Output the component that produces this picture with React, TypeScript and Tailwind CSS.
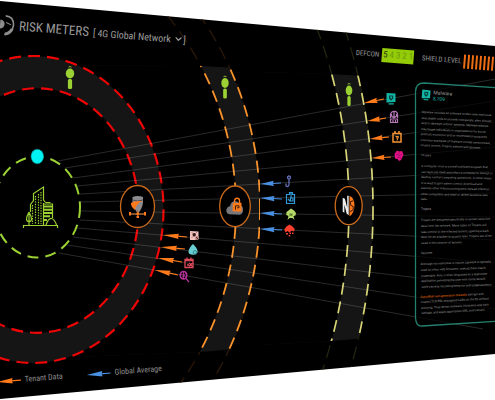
import { ChevronDown } from "lucide-react";
import type { ReactNode } from "react";

type Point = [number, number];

const ORANGE = "#ff7a1a";
const BLUE = "#4a90e2";

const rays: [number, number, number, number][] = [
  [58, 161, 495, 79],
  [65, 168, 495, 101],
  [73, 178, 495, 122],
  [77, 186, 495, 147],
  [80, 194, 495, 171],
  [81, 202, 495, 193],
  [81, 211, 495, 217],
  [80, 220, 495, 240],
  [77, 228, 495, 263],
  [73, 237, 495, 287],
  [67, 245, 495, 309],
  [59, 253, 483, 329],
];

const arrows: { tip: Point; tail: Point; color: string }[] = [
  { tip: [163, 235], tail: [187, 237], color: ORANGE },
  { tip: [161, 247], tail: [185, 249], color: ORANGE },
  { tip: [158, 258], tail: [182, 262], color: ORANGE },
  { tip: [155, 270], tail: [178, 275], color: ORANGE },
  { tip: [260, 184], tail: [281, 183], color: BLUE },
  { tip: [260, 198], tail: [282, 199], color: BLUE },
  { tip: [260, 213], tail: [282, 214], color: BLUE },
  { tip: [260, 229], tail: [282, 230], color: BLUE },
  { tip: [364, 103], tail: [384, 99], color: ORANGE },
  { tip: [368, 121], tail: [386, 118], color: ORANGE },
  { tip: [370, 139], tail: [389, 137], color: ORANGE },
  { tip: [372, 158], tail: [391, 157], color: ORANGE },
];

const articles: { title?: string; link?: string; tilt: string; titleTilt: string; height: string; lines: string[] }[] = [
  {
    tilt: "rotate-[2.6deg]",
    titleTilt: "",
    height: "h-[38px]",
    lines: [
      "Malware includes all software written with malicious",
      "executable code to secretly manipulate, alter, disrupt",
      "and/or damage victims' systems. Malware attacks",
      "may target individuals or organizations for social",
      "political, economic and/or monetization purposes",
      "Common examples of malware include ransomware,",
      "viruses, worms, Trojans, adware and spyware.",
    ],
  },
  {
    title: "Viruses",
    tilt: "rotate-[1deg]",
    titleTilt: "rotate-[2deg]",
    height: "h-[38px]",
    lines: [
      "A computer virus is a small software program that",
      "can replicate itself and infect a computer to disrupt or",
      "destroy normal computing operations. In other cases",
      "it is used to gain admin control, download and",
      "execute other malicious programs, spread infection",
      "other computers, and steal or delete sensitive user",
      "data.",
    ],
  },
  {
    title: "Trojans",
    tilt: "rotate-[-1deg]",
    titleTilt: "rotate-0",
    height: "h-[28px]",
    lines: [
      "Trojans are designed specifically to extract sensitive",
      "data from the network. Many types of Trojans will",
      "take control of the infected system, opening a back",
      "door for an attacker to access later. Trojans are often",
      "used in the creation of botnets.",
    ],
  },
  {
    title: "Spyware",
    tilt: "rotate-[-2deg]",
    titleTilt: "rotate-[-2deg]",
    height: "h-[28px]",
    lines: [
      "Although not malicious in nature, spyware is typically",
      "used to infect web browsers, making them nearly",
      "inoperable. Also, it often disguised as a legitimate",
      "application, providing the user with some benefit",
      "while secretly recording behavior and usage patterns.",
    ],
  },
  {
    link: "SonicWall next-generation firewalls",
    tilt: "rotate-[-3deg]",
    titleTilt: "",
    height: "h-[21px]",
    lines: [
      " decrypt and",
      "inspect TLS/SSL encrypted traffic on the fly without",
      "proxying. They detect malware, intrusions and data",
      "leakage, and apply application/URL and content",
    ],
  },
];

function Arrow({ tip, tail, color }: { tip: Point; tail: Point; color: string }) {
  const dx = tail[0] - tip[0];
  const dy = tail[1] - tip[1];
  const length = Math.hypot(dx, dy);
  const angle = (Math.atan2(dy, dx) * 180) / Math.PI;
  const head = length * 0.66;
  return (
    <g transform={`translate(${tip[0]} ${tip[1]}) rotate(${angle})`} fill={color} stroke={color}>
      <path d={`M0 0L${head} -2.7L${head - 1} 0L${head} 2.7Z`} stroke="none" />
      <path d={`M${head - 2} 0H${length}`} strokeWidth="1.1" />
    </g>
  );
}

function Sensor({ x, y, rx }: { x: number; y: number; rx: number }) {
  return (
    <g fill="#9bd133">
      <path d={`M${x - 2} ${y - 6.2}Q${x} ${y - 8.4} ${x + 2} ${y - 6.2}Z`} />
      <ellipse cx={x} cy={y} rx={rx} ry="5" />
      <rect x={x - rx / 2} y={y + 5.4} width={rx} height="10" rx="1.5" />
    </g>
  );
}

function Badge({ x, y, rx, ry, children }: { x: number; y: number; rx: number; ry: number; children: ReactNode }) {
  return (
    <g>
      <ellipse cx={x} cy={y} rx={rx} ry={ry} fill="#000" stroke="#cc6a1c" strokeWidth="1.3" />
      <g transform={`translate(${x} ${y})`}>{children}</g>
    </g>
  );
}

function Monitor() {
  return (
    <>
      <path d="M-4.5 -5L4.5 -4.5V4L-4.5 4.5Z" fill="#12b5a6" />
      <path d="M-2 -2.6H2.2V0.6L0 2.8L-2 0.6Z" fill="#07423d" />
      <path d="M-0.8 -1.4H1V0.2H-0.8Z" fill="#12b5a6" />
      <path d="M-2.4 5.8H2.8" stroke="#12b5a6" strokeWidth="1.2" />
    </>
  );
}

function City() {
  return (
    <g fill="none" stroke="#9bd133" strokeWidth="1.2">
      <path d="M23.500 228V225.500H57.500V228" />
      <path d="M30.500 212V204.500L33.500 200.500V193.500L43.500 187V200L45.500 202.500" />
      <path d="M43.500 204H52.500V218" />
      <path d="M43.500 206.500H52M43.500 209.800H52M43.500 213H52M43.500 216.300H50M43.500 220H47" strokeWidth="1.9" />
      <path d="M43.500 203V225" />
      <path d="M35.500 196V224M38.500 194V224M41 192V224" strokeDasharray="1.4 1.2" />
      <path d="M32.500 205V224" strokeDasharray="1.4 1.2" />
      <path d="M29 225V212M29 212Q24 221 29 221.500Q34 221 29 212" />
      <path d="M46 225Q48.500 218 51.500 218.500Q54.500 219 56.500 225" />
      <path d="M45.500 202.500H50.500" />
    </g>
  );
}

function ThreatIcons() {
  return (
    <>
      <g transform="translate(194.500 235.500)">
        <path d="M-4.500 -4.500L4 -4V2L1 4.500H-4.500Z" fill="#f2c4bd" />
        <circle r="1.7" cx="-0.300" cy="-0.800" fill="#3b1c1c" />
        <path d="M-2.500 -3L-1.500 -2M2 -3L1 -2M-2.500 2L-1.500 1" stroke="#3b1c1c" strokeWidth="0.700" />
        <circle r="2" cx="2.600" cy="2.600" fill="#b98985" />
        <path d="M1.400 1.400L3.800 3.800" stroke="#2b1515" strokeWidth="0.700" />
      </g>
      <g transform="translate(193 249.500)">
        <path d="M0 -5.500Q5.500 0 4.500 3Q3 5.500 0 5.200Q-5 5 -4.500 2Q-4 -2 0 -5.500Z" fill="#69cdd2" />
        <circle r="1.800" cx="2" cy="3" fill="none" stroke="#24757a" strokeWidth="0.800" />
      </g>
      <g transform="translate(189 263)" fill="none" stroke="#dd4a5c" strokeWidth="1.300">
        <path d="M-4 -3.500H4V4.500H-4ZM-4 -2.500H4M-2 -5.500V-3M2 -5.500V-3" />
        <path d="M0 0L3.500 3.500M3.500 0L0 3.500M-2 2H0" />
      </g>
      <g transform="translate(184 276)" fill="none" stroke="#b8329b">
        <ellipse cx="-0.500" cy="-0.800" rx="3.300" ry="3.800" strokeWidth="1.500" />
        <path d="M-3 -2L2 1M2 -3L-2.500 2M-0.500 -4V3" strokeWidth="0.900" />
        <path d="M2 2.500L5 6" strokeWidth="1.200" />
      </g>
      <g transform="translate(288 181.500)" fill="none" stroke="#6570b8" strokeWidth="1.300">
        <circle cx="1" cy="-4" r="1.500" />
        <path d="M1 -2V3Q0.500 6 -2 4.500V2" />
      </g>
      <g transform="translate(290.500 198)" fill="none" stroke="#3198d4" strokeWidth="1.200">
        <path d="M-4 -3.500H-1V-5.500H2V-3.500H4V5.500H-4ZM0.500 -5V0" />
        <path d="M-2.500 1L0 3.500M0 0H2.500V3H0Z" />
      </g>
      <g transform="translate(291 214)">
        <path d="M0 -5.500L3 -3.500L5 -1L4.500 1.500L2.500 2L3.500 6L1.500 4H-1.500L-3.500 6L-2.500 2L-4.800 1L-4.500 -2L-2.500 -3.500Z" fill="#b5d969" />
        <path d="M-1.500 -0.500H1.500V1.800H-1.500Z" fill="#5f7c2c" />
      </g>
      <g transform="translate(289.500 230.500)" fill="#ff3f2d">
        <path d="M0 -6L3 -4L5.200 -1.500L4.500 1L2 0L0 2L-2 0.500L-4 2L-5.200 -1L-3 -4Z" />
        <path d="M-3.500 2.500H-1.500V4H-3.500ZM0 2H1.500V3.500H0ZM2.500 2H4V3.500H2.500ZM-0.800 4.500H0.800V6H-0.800Z" />
      </g>
      <g transform="translate(391 98)">
        <Monitor />
      </g>
      <g transform="translate(394 117)" fill="none" stroke="#b577b8" strokeWidth="1.200">
        <path d="M-3.500 1V-3Q-2 -6 0 -5.500Q3 -6 3.500 -3V1" />
        <path d="M-2.500 -3V-1L0 1L2.500 -1V-3M0 -5V1" />
        <path d="M-3.500 2V5.500H3.500V2ZM-1 3V5M1.500 3V5" />
      </g>
      <g transform="translate(397 137)" fill="none" stroke="#f79433" strokeWidth="1.500">
        <path d="M-4 -3.500H4V5H-4ZM-2 -6V-3M2 -6V-3" />
        <path d="M-1.500 -0.500H1.500L0 3.500M0 0V2" strokeWidth="1" />
      </g>
      <g transform="translate(399 156)">
        <path d="M-2 -5.500L0 -4.500L3 -5L4.500 -1.500L3.500 1L2 4L0 5L-1.500 3L-4 2.500L-4.500 -2Z" fill="#e5118a" />
        <path d="M-3 -1L-1 -2L0 0L3 -2M-2 2L0 1L2 2M0 -4V-2" stroke="#8f0c58" strokeWidth="0.800" fill="none" />
      </g>
    </>
  );
}

function ThreatMap() {
  return (
    <svg
      className="absolute inset-0 h-full w-full"
      viewBox="0 0 495 400"
      preserveAspectRatio="xMinYMin meet"
      role="img"
      aria-label="Threat map"
    >
      <defs>
        <clipPath id="screen">
          <path d="M0 1L495 46V354L0 399Z" />
        </clipPath>
        <clipPath id="orange-zone">
          <path d="M0 65L200 66L260 69V347L200 352L0 360Z" />
        </clipPath>
        <clipPath id="yellow-zone">
          <path d="M260 72L331 74L380 77V337L331 341L260 345Z" />
        </clipPath>
      </defs>
      <g clipPath="url(#screen)">
        <rect width="495" height="400" fill="#000" />
        <g fill="none" strokeWidth="1.300" strokeDasharray="13 7">
          <g stroke="#242411">
            <ellipse cx="44" cy="207" rx="305" ry="400" />
            <ellipse cx="78" cy="208" rx="295" ry="420" />
          </g>
          <g stroke="#2c1808">
            <ellipse cx="-59" cy="208" rx="295" ry="300" />
            <ellipse cx="-40" cy="208" rx="300" ry="320" />
          </g>
        </g>
        <g clipPath="url(#yellow-zone)" strokeWidth="1.700" stroke="#d9d677" strokeDasharray="12 7">
          <ellipse cx="78" cy="208" rx="295" ry="420" fill="#151515" />
          <ellipse cx="44" cy="207" rx="305" ry="400" fill="#000" />
        </g>
        <g clipPath="url(#orange-zone)" strokeWidth="1.800" stroke="#f8922a" strokeDasharray="12 7">
          <ellipse cx="-40" cy="208" rx="300" ry="320" fill="#151515" />
          <ellipse cx="-59" cy="208" rx="295" ry="300" fill="#000" />
        </g>
        <g strokeWidth="2.200" stroke="#ee0505" strokeDasharray="12 7">
          <ellipse cx="33" cy="209.500" rx="130.500" ry="153.500" fill="#151515" />
          <ellipse cx="37" cy="210.500" rx="101.500" ry="122.300" fill="#000" />
        </g>
        <g stroke="#fff" strokeOpacity="0.160" strokeWidth="1">
          {rays.map(([x1, y1, x2, y2]) => (
            <line key={y1} x1={x1} y1={y1} x2={x2} y2={y2} />
          ))}
        </g>
        <path
          d="M500 88L424 83Q415.500 83 415.500 92V318Q416 326.500 422 326L500 321Z"
          fill="#000"
          fillOpacity="0.700"
          stroke="#24806e"
          strokeWidth="1.300"
        />
        <ellipse
          cx="37"
          cy="207"
          rx="43"
          ry="50.500"
          fill="none"
          stroke="#9bd133"
          strokeWidth="2"
          strokeDasharray="11 7"
        />
        <ellipse cx="37.300" cy="156.500" rx="6.300" ry="7.300" fill="#00f2f2" stroke="#007c80" strokeWidth="0.600" />
        <City />
        <Sensor x={70} y={73.5} rx={4.2} />
        <Sensor x={225} y={83} rx={3.7} />
        <Sensor x={349} y={90.5} rx={3.3} />
        <Badge x={137.5} y={206.5} rx={17} ry={21}>
          <path d="M-5 -9.500Q0 -11.500 5.500 -9.500V-4Q5 2 0.500 7Q-4 2 -5 -4Z" fill="#8c8c90" />
          <path d="M-5 -6.500Q0 -4.500 5.500 -6.500" stroke="#4e4e52" fill="none" />
          <path d="M5.500 -5.500Q-1 -4 -2.500 3.500Q-7 0 -6.500 -3.500Q-3 -6 5.500 -5.500Z" fill={ORANGE} />
          <path d="M-8 7.500H8M0.300 4V11" stroke="#b06b38" strokeWidth="1.500" />
          <path d="M-8.500 5.500H-6.500V9H-8.500ZM6.500 5.500H8.500V9H6.500ZM-1 6H1.600V8.600H-1ZM-1 9.500H1.500V11.500H-1Z" fill={ORANGE} />
        </Badge>
        <Badge x={235} y={206.3} rx={15.3} ry={20.3}>
          <path d="M-6 8Q-9.500 6.500 -8.500 3Q-7.500 0 -5 0Q-4 -5 0 -5Q4 -5 5 -1Q8.500 0 8 4Q8 7 5 8.500Z" fill="#77777b" />
          <path d="M-0.500 -3V-5.500Q0 -8 2 -8Q4.500 -8 4.500 -5.500V-3" fill="none" stroke={ORANGE} strokeWidth="1.400" />
          <path d="M-2.300 -3L6.500 -3.500V5.500L-2.300 5Z" fill={ORANGE} />
          <path d="M0.500 3.500V-0.500H4V1.500H2" stroke="#422006" fill="none" />
        </Badge>
        <Badge x={348.7} y={205.7} rx={13.5} ry={19}>
          <path d="M-6 -8L-3.800 -7L-1.500 2V-10H0V9.500L-2 8L-4.300 -1V7L-6 6Z" fill="#eee" />
          <path d="M0.800 -10Q5.800 -8 5.800 0Q5.300 8 0.800 10.500Z" fill={ORANGE} />
          <path d="M4.500 -5L1.800 -4V-1L4.500 1V4L1.500 6" fill="none" stroke="#512307" strokeWidth="1.100" />
        </Badge>
        {arrows.map((arrow) => (
          <Arrow key={arrow.tip.join()} {...arrow} />
        ))}
        <ThreatIcons />
      </g>
    </svg>
  );
}

function Header() {
  return (
    <header className="relative flex h-6 origin-left rotate-[4.5deg] items-center whitespace-nowrap text-[#9a9a9a]">
      <svg className="h-6 w-4 shrink-0" viewBox="0 0 16 24" fill="none" aria-hidden="true">
        <circle cx="0" cy="11" r="4.500" fill="#8d8d90" />
        <path d="M5 2.500Q13 2.500 13.500 11Q13 19 5 21" stroke="#8d8d90" strokeWidth="1.600" />
        <path d="M12.500 15Q10 20 5.500 20.500" stroke="#8d8d90" strokeWidth="3" />
        <path d="M6 9L11 11" stroke="#8d8d90" />
      </svg>
      <h1 className="ml-[3px] text-[13px] leading-6">RISK METERS</h1>
      <div className="ml-1 flex items-center text-[10px]">
        <span>[</span>
        <span className="relative ml-[2px] flex items-center">
          <select aria-label="Network" className="appearance-none bg-transparent pr-3">
            <option>4G Global Network</option>
          </select>
          <ChevronDown className="pointer-events-none absolute right-0 size-[10px]" strokeWidth={3} />
        </span>
        <span>]</span>
      </div>
      <div className="ml-auto flex items-center text-[7px]">
        <span>DEFCON</span>
        <ol className="ml-[3px] flex h-[14px] w-8 items-center justify-around bg-[#94cc08] text-[9px] text-[#6c9a08]">
          <li className="text-[#26380a]">5</li>
          <li>4</li>
          <li>3</li>
          <li>2</li>
          <li>1</li>
        </ol>
        <span className="ml-2">SHIELD LEVEL</span>
        <div className="ml-[2px] flex gap-[2px]" role="meter" aria-label="Shield level" aria-valuenow={8}>
          {Array.from({ length: 8 }, (_, i) => (
            <span key={i} className="h-[14px] w-[2px] bg-[#ee6c14]" />
          ))}
        </div>
      </div>
    </header>
  );
}

function MalwarePanel() {
  return (
    <aside className="relative ml-auto w-[74px] whitespace-nowrap font-['Roboto',sans-serif] text-[3px] leading-[5px] text-[#9c9c9c]">
      <div className="flex rotate-[4deg] items-center gap-[2px]">
        <svg className="h-3 w-[10px]" viewBox="-5 -6 10 13" aria-hidden="true">
          <Monitor />
        </svg>
        <div className="text-[5px] leading-[6px]">
          <h2>Malware</h2>
          <p className="text-[#12b5a6]">8,709</p>
        </div>
      </div>
      <div className="mt-[7px] flex flex-col gap-[5px]">
        {articles.map(({ title, link, tilt, titleTilt, height, lines }) => (
          <section key={lines[0]} className="flex flex-col gap-[6px]">
            {title && <h3 className={`origin-left ${titleTilt}`}>{title}</h3>}
            <p className={`flex origin-left flex-col justify-between ${height} ${tilt}`}>
              {lines.map((line, i) => (
                <span key={line}>
                  {i === 0 && link && (
                    <a href="#firewalls" className="text-[#ff7a10]">
                      {link}
                    </a>
                  )}
                  {line}
                </span>
              ))}
            </p>
          </section>
        ))}
      </div>
    </aside>
  );
}

function LegendItem({ color, label }: { color: string; label: string }) {
  return (
    <li className="flex items-center gap-1">
      <svg className="h-[6px] w-6" viewBox="0 -3 24 6" aria-hidden="true">
        <Arrow tip={[0, 0]} tail={[24, 0]} color={color} />
      </svg>
      {label}
    </li>
  );
}

export default function App() {
  return (
    <main className="relative flex min-h-screen flex-col overflow-hidden bg-white pt-[13px] font-['Liberation_Sans_Narrow','Roboto_Condensed','Roboto',sans-serif]">
      <ThreatMap />
      <Header />
      <div className="mt-[54px] flex">
        <MalwarePanel />
      </div>
      <ul className="relative mt-auto mb-3 -ml-[3px] flex origin-left rotate-[-4.5deg] gap-6 text-[8px] leading-3 text-[#8c8c8c]">
        <LegendItem color={ORANGE} label="Tenant Data" />
        <LegendItem color={BLUE} label="Global Average" />
      </ul>
    </main>
  );
}
